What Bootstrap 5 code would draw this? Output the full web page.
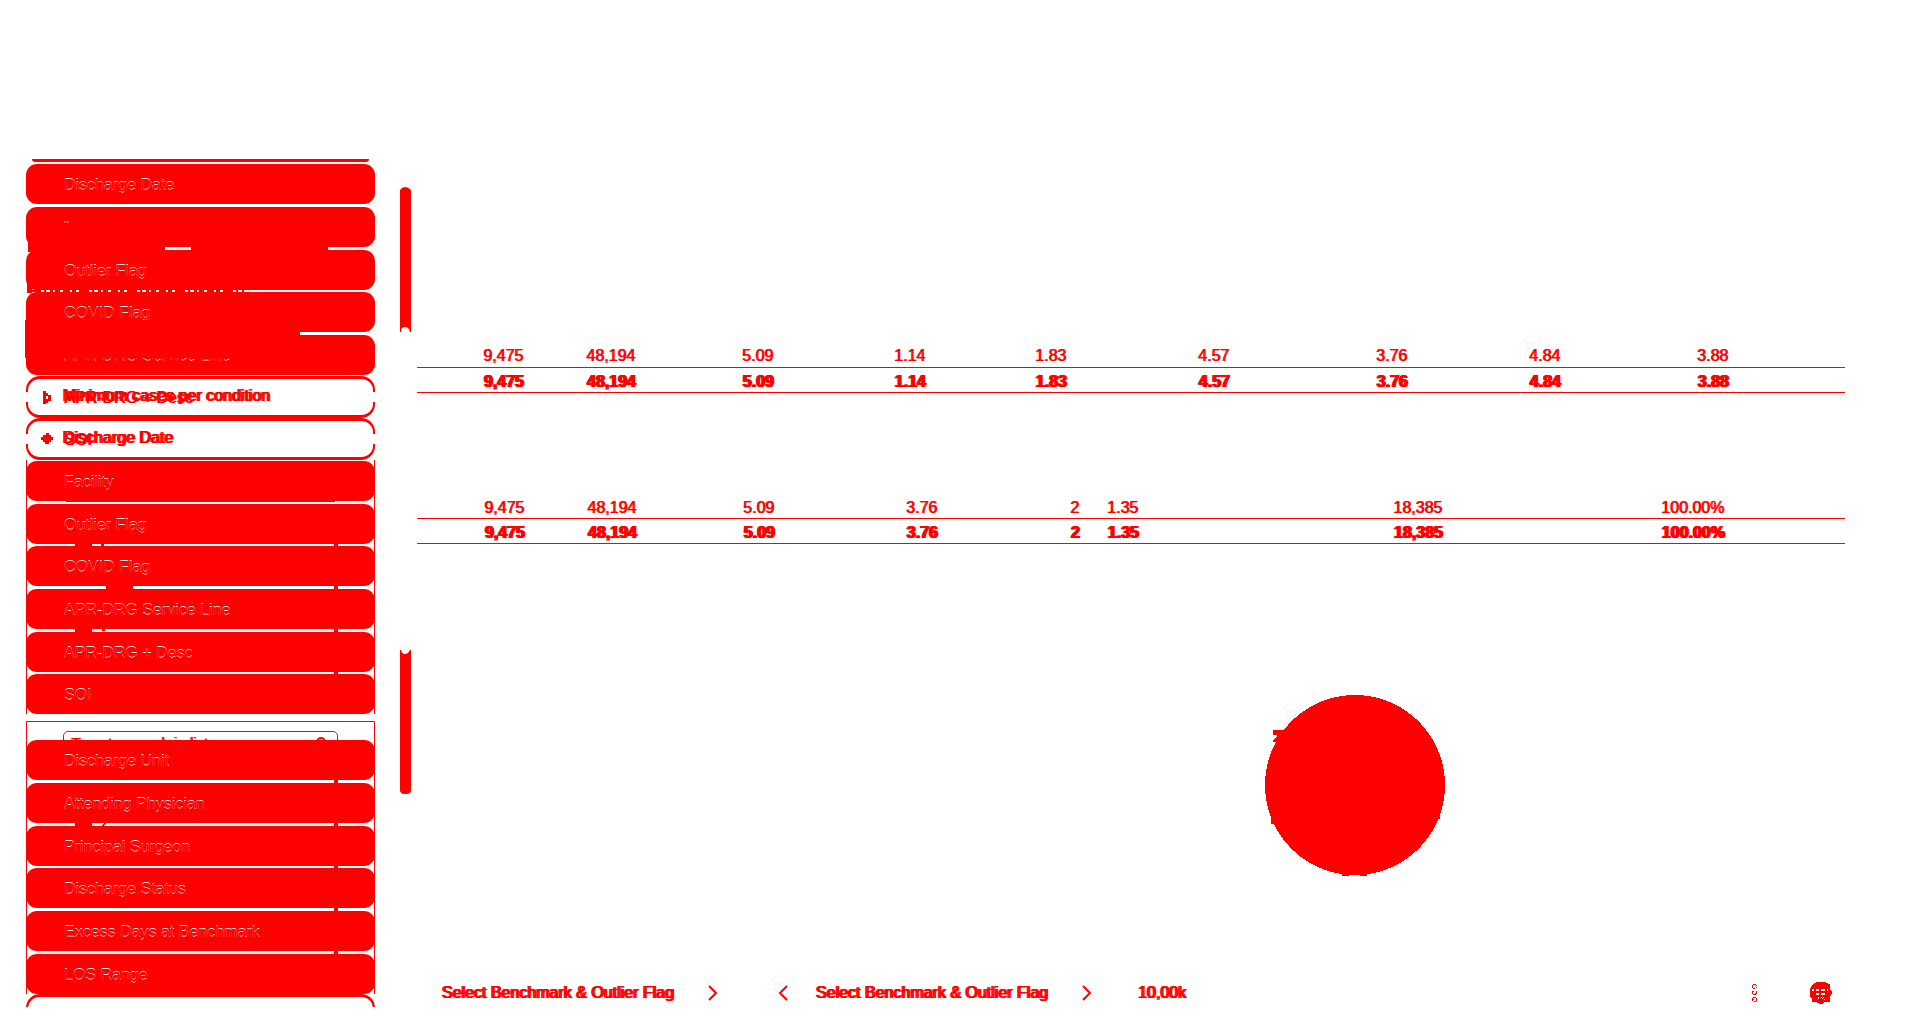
<!DOCTYPE html>
<html lang="en">
<head>
<meta charset="utf-8">
<meta name="viewport" content="width=device-width, initial-scale=1">
<title>Benchmark &amp; Outlier</title>
<link rel="stylesheet" href="https://cdn.jsdelivr.net/npm/bootstrap@5.3.0/dist/css/bootstrap.min.css">
<style>
:root{--ink:#f00}
body{font-family:"Liberation Sans",Arial,sans-serif;font-size:16px;line-height:20px;color:var(--ink);background:#fff}
.page-shell{padding-left:26px;padding-right:75px}
.filters{flex:0 0 349px;padding-top:159px}
.sliver{height:3px;margin:0 6px 2px;background:var(--ink);border-radius:0 0 6px 6px}
.pill{display:block;width:100%;height:40px;margin:0 0 3px;padding:1px 0 0 38px;border:0;border-radius:11px;background:var(--ink);color:#fff;text-align:left;position:relative;z-index:1}
.pill::after{content:attr(data-t);position:absolute;left:38px;top:12px;color:var(--ink);text-shadow:0 0 1px var(--ink)}
.pill.tight{margin-bottom:2px}
.pill.end{margin-bottom:0}
.hairline{height:1px}
.outlined{display:flex;align-items:center;width:100%;height:42px;padding:0 0 3px 35px;border:3px solid var(--ink);border-width:3px 2px;border-radius:14px;background:#fff;color:var(--ink);text-align:left;position:relative}
.outlined::before{content:"";position:absolute;left:-2px;right:-2px;top:13px;height:10px;border:solid #fff;border-width:0 2px}
.under{position:absolute;left:36px;top:9px;text-shadow:1px 0 var(--ink)}
.mark-icon{position:absolute;left:13px;top:11px}
.dbl{text-shadow:1px 0 var(--ink),-1px 0 var(--ink)}
.list-a{border:solid var(--ink);border-width:0 1px;padding-top:1px;margin-bottom:7px}
.list-b{border:solid var(--ink);border-width:1px 1px 0}
.list-a .pill,.list-b .pill{width:auto;min-width:calc(100% + 2px);margin-left:-1px;margin-right:-1px}
.find{display:block;width:275px;height:36px;margin:9px 0 -27px 36px;padding:0 7px 14px;border:1px solid var(--ink);border-radius:5px;font-size:15px;background:#fff;color:var(--ink);outline:0}
.find::placeholder{color:var(--ink);opacity:1;text-shadow:1px 0 var(--ink)}
.find-icon{position:absolute;left:288px;top:15px}
.last-cap{height:13px;overflow:hidden}
.last-cap div{height:40px;border:3px solid var(--ink);border-width:3px 2px;border-radius:14px}
.traces{position:absolute;left:-1px;top:0;z-index:2;pointer-events:none}
.rail{flex:0 0 11px;margin-left:25px;padding-top:187px}
.rail svg{display:block}
.gap-rail{height:318px}
.content{margin-left:6px;padding-top:342px}
.figures{table-layout:fixed;width:100%;border-collapse:collapse;margin:0 0 101px;text-align:right}
.figures td,.figures th{height:25px;padding:3px 0 0;line-height:21px;border-bottom:1px solid var(--ink);text-shadow:1px 0 var(--ink),-1px 0 var(--ink)}
.figures td{text-shadow:-1px 0 var(--ink)}
.second{margin-bottom:150px}
.disc{margin-left:847px}
.foot{margin-top:106px;padding-left:25px}
.foot button{border:0;background:none;color:var(--ink);padding:0;display:flex;align-items:center}
.s34{margin-left:34px}.s28{margin-left:28px}.s60{margin-left:60px}.s46{margin-left:46px}
.globe-btn{margin-left:53px;margin-right:13px}
</style>
<script src="https://cdn.jsdelivr.net/npm/bootstrap@5.3.0/dist/js/bootstrap.bundle.min.js"></script>
</head>
<body>
<div class="page-shell d-flex align-items-start">
  <aside class="filters position-relative">
    <div class="sliver"></div>
    <button class="pill">Discharge Date</button>
    <button class="pill" aria-label="Facility">¨</button>
    <button class="pill tight">Outlier Flag</button>
    <button class="pill">COVID Flag</button>
    <button class="pill end">APR-DRG Service Line</button>
    <div class="hairline"></div>
    <button class="outlined"><svg class="mark-icon" width="12" height="14" viewBox="0 0 12 14"><path d="M2 1h3v2h2v2h3v6H7v2H5v1H2z" fill="red"/><path d="M5 6h2v3H5z" fill="#fff"/></svg><span class="dbl">Minimum cases per condition</span><span class="under">APR-DRG + Desc</span></button>
    <button class="outlined"><svg class="mark-icon" width="12" height="14" viewBox="0 0 12 14"><path d="M5 1h3v2h2v2h2v3h-2v2H8v2H4v-2H2V8H0V5h2V3h3z" fill="red"/></svg><span class="dbl">Discharge Date</span><span class="under">SOI</span></button>
    <div class="list-a">
      <button class="pill">Facility</button>
      <button class="pill tight">Outlier Flag</button>
      <button class="pill">COVID Flag</button>
      <button class="pill">APR-DRG Service Line</button>
      <button class="pill tight">APR-DRG + Desc</button>
      <button class="pill end">SOI</button>
    </div>
    <div class="list-b position-relative">
      <input class="find" type="text" aria-label="Search in list" placeholder="Type to search in list">
      <svg class="find-icon" width="12" height="12" viewBox="0 0 12 12"><circle cx="6" cy="5" r="4" fill="none" stroke="red" stroke-width="2"/></svg>
      <button class="pill">Discharge Unit</button>
      <button class="pill">Attending Physician</button>
      <button class="pill tight">Principal Surgeon</button>
      <button class="pill">Discharge Status</button>
      <button class="pill">Excess Days at Benchmark</button>
      <button class="pill end">LOS Range</button>
    </div>
    <div class="last-cap"><div></div></div>
    <svg class="traces" width="350" height="1007" viewBox="25 0 350 1007" fill="red" shape-rendering="crispEdges">
      <path d="M28 236h137v16H28zM191 236h137v16H191zM27 279h5v14h-5zM25 320h275v38H25z"/>
      <path d="M31 291H244" stroke="red" stroke-width="2" stroke-dasharray="10 3 2 4 3 2 5 3 7 2 4 3"/>
      <path d="M66 500h269v2H66zM75 543h17v4H75zM101 543h3v4h-3zM106 585h27v5h-27zM75 628h17v5H75zM102 628h3v3h-3zM75 822h17v5H75zM101 826l3-3h2l-3 3z"/>
      <path d="M336 544v3M336 586v3M336 629v3M336 672v3M336 780v3M336 823v3M336 865v3M336 908v3M336 951v3" stroke="red" stroke-width="4"/>
    </svg>
  </aside>

  <div class="rail">
    <svg width="11" height="145" viewBox="0 0 11 145"><path d="M0 3Q2 0 5 0T11 3V145H10Q9 140 5 140T1 145H0z" fill="red"/></svg>
    <div class="gap-rail"></div>
    <svg width="11" height="144" viewBox="0 0 11 144"><path d="M0 0H1Q2 4 5 4T10 0H11V141Q10 144 7 144H4Q1 144 0 141z" fill="red"/></svg>
  </div>

  <main class="content flex-grow-1">
    <table class="figures">
      <colgroup><col style="width:107px"><col style="width:112px"><col style="width:138px"><col style="width:152px"><col style="width:141px"><col style="width:163px"><col style="width:178px"><col style="width:153px"><col style="width:168px"><col style="width:116px"></colgroup>
      <tbody>
      <tr><td>9,475</td><td>48,194</td><td>5.09</td><td>1.14</td><td>1.83</td><td>4.57</td><td>3.76</td><td>4.84</td><td>3.88</td><td></td></tr>
      <tr><th>9,475</th><th>48,194</th><th>5.09</th><th>1.14</th><th>1.83</th><th>4.57</th><th>3.76</th><th>4.84</th><th>3.88</th><th></th></tr>
      </tbody>
    </table>
    <table class="figures second">
      <colgroup><col style="width:108px"><col style="width:112px"><col style="width:138px"><col style="width:163px"><col style="width:142px"><col style="width:59px"><col style="width:304px"><col style="width:282px"><col style="width:120px"></colgroup>
      <tbody>
      <tr><td>9,475</td><td>48,194</td><td>5.09</td><td>3.76</td><td>2</td><td>1.35</td><td>18,385</td><td>100.00%</td><td></td></tr>
      <tr><th>9,475</th><th>48,194</th><th>5.09</th><th>3.76</th><th>2</th><th>1.35</th><th>18,385</th><th>100.00%</th><th></th></tr>
      </tbody>
    </table>
    <svg class="disc d-block" width="182" height="182" viewBox="0 0 182 182" shape-rendering="crispEdges"><circle cx="91" cy="91" r="90" fill="red"/><path d="M9 36h13v12H9v-2l4-3v-2H9zM7 120h8v10H7zM78 178h7v4h-7zM96 178h7v4h-7zM170 118h6v7h-6z" fill="red"/></svg>
    <footer class="foot d-flex align-items-center">
      <span class="dbl">Select Benchmark &amp; Outlier Flag</span>
      <button class="s34" aria-label="Next"><svg width="10" height="16" viewBox="0 0 10 16"><path d="M1 1l7 7-7 7" fill="none" stroke="red" stroke-width="2"/></svg></button>
      <button class="s60" aria-label="Previous"><svg width="10" height="16" viewBox="0 0 10 16"><path d="M9 1L2 8l7 7" fill="none" stroke="red" stroke-width="2"/></svg></button>
      <span class="dbl s28">Select Benchmark &amp; Outlier Flag</span>
      <button class="s34" aria-label="Next sheet"><svg width="10" height="16" viewBox="0 0 10 16"><path d="M1 1l7 7-7 7" fill="none" stroke="red" stroke-width="2"/></svg></button>
      <span class="dbl s46">10,00k</span>
      <button class="ms-auto" aria-label="More"><svg width="5" height="18" viewBox="0 0 5 18" shape-rendering="crispEdges"><path d="M1 0h3v1h1v1H4V1H1zM0 1h1v3H0zM1 4h2v1H1zM4 3h1v1H4zM0 7h2v1H0zM0 8h1v2H0zM1 10h2v1H1zM4 7h1v3H4zM3 9h1v2H3zM1 13h3v1H1zM0 14h1v3H0zM2 17h2v1H2zM4 14h1v3H4zM1 15h1v1H1z" fill="red"/></svg></button>
      <button class="globe-btn" aria-label="Language"><svg width="22" height="22" viewBox="0 0 22 22" shape-rendering="crispEdges"><path d="M6 0h10v1h2v1h2v6h1v1h1v3h-1v2h-1v6h-6v1h-1v1H9v-1H7v-1H2v-4H1v-1H0V6h1V4h1V3h1V2h1V1h2z" fill="red"/><path d="M2 7h2v2H2zM6 7h3v2H6zM11 7h4v2h-4zM17 7h1v2h-1zM6 11h3v2H6zM11 11h4v2h-4zM8 15h1v2H8zM11 15h1v1h-1zM13 15h1v1h-1zM12 16h1v1h-1zM14 17h1v1h-1z" fill="#fff"/></svg></button>
    </footer>
  </main>
</div>
<script>
document.querySelectorAll('.pill').forEach(p => { p.dataset.t = p.textContent; });
</script>
</body>
</html>
